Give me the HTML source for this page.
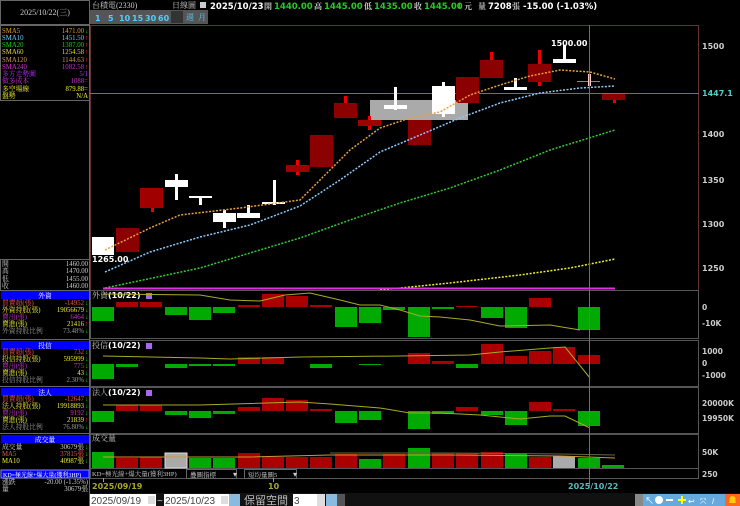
<!DOCTYPE html>
<html><head><meta charset="utf-8"><style>
html,body{margin:0;padding:0;background:#000;width:740px;height:506px;overflow:hidden}
svg{display:block;font-family:"Liberation Sans","Noto Sans CJK TC",sans-serif}
.s{font-family:"Liberation Serif","Noto Serif CJK SC",serif;font-size:8px}
.l text{font-size:6.8px}
.b{font-family:"DejaVu Sans","Liberation Sans",sans-serif;font-weight:bold}
</style></head><body>
<svg width="740" height="506" viewBox="0 0 740 506" xmlns="http://www.w3.org/2000/svg">
<rect width="740" height="506" fill="#000"/>
<rect x="0.5" y="0.5" width="89" height="24" fill="none" stroke="#666"/>
<text x="45" y="15" class="s" fill="#ccc" text-anchor="middle">2025/10/22(三)</text>
<rect x="0.5" y="25.5" width="89" height="75" fill="none" stroke="#666"/>
<g class="s l">
<text x="2" y="33" fill="#e0a030">SMA5</text><text x="84" y="33" fill="#e0a030" text-anchor="end">1471.00</text><text x="85" y="33" fill="#0c0">↓</text>
<text x="2" y="40" fill="#6cf">SMA10</text><text x="84" y="40" fill="#6cf" text-anchor="end">1451.50</text><text x="85" y="40" fill="#f33">↑</text>
<text x="2" y="47" fill="#2c2">SMA20</text><text x="84" y="47" fill="#2c2" text-anchor="end">1387.00</text><text x="85" y="47" fill="#f33">↑</text>
<text x="2" y="54" fill="#dd3">SMA60</text><text x="84" y="54" fill="#dd3" text-anchor="end">1254.58</text><text x="85" y="54" fill="#f33">↑</text>
<text x="2" y="62" fill="#c96">SMA120</text><text x="84" y="62" fill="#c96" text-anchor="end">1144.63</text><text x="85" y="62" fill="#f33">↑</text>
<text x="2" y="69" fill="#c3c">SMA240</text><text x="84" y="69" fill="#c3c" text-anchor="end">1082.58</text><text x="85" y="69" fill="#f33">↑</text>
<text x="2" y="76" fill="#a3f">多方走勢圖</text><text x="88" y="76" fill="#a3f" text-anchor="end">5/1</text>
<text x="2" y="83" fill="#c3c">做多成本</text><text x="88" y="83" fill="#c3c" text-anchor="end">1088=</text>
<text x="2" y="91" fill="#ee3">多空場線</text><text x="88" y="91" fill="#ee3" text-anchor="end">879.88=</text>
<text x="2" y="98" fill="#ee3">盤勢</text><text x="88" y="98" fill="#ee3" text-anchor="end">N/A</text>
</g>
<rect x="0.5" y="259.5" width="89" height="31" fill="none" stroke="#666"/>
<g class="s l" fill="#ccc">
<text x="2" y="266">開</text><text x="88" y="266" text-anchor="end">1460.00</text>
<text x="2" y="273">高</text><text x="88" y="273" text-anchor="end">1470.00</text>
<text x="2" y="281">低</text><text x="88" y="281" text-anchor="end">1455.00</text>
<text x="2" y="288">收</text><text x="88" y="288" text-anchor="end">1460.00</text>
</g>
<g class="s l">
<rect x="1" y="291" width="88" height="8" fill="#00f"/><text x="45" y="298" fill="#fff" text-anchor="middle">外資</text>
<text x="2" y="305" fill="#e55">買賣超(張)</text><text x="84" y="305" fill="#e55" text-anchor="end">-14952</text><text x="85" y="305" fill="#0c0">↓</text>
<text x="2" y="312" fill="#ee3">外資持股(張)</text><text x="84" y="312" fill="#ee3" text-anchor="end">19056679</text><text x="85" y="312" fill="#0c0">↓</text>
<text x="2" y="319" fill="#c3c">賣出(張)</text><text x="84" y="319" fill="#c3c" text-anchor="end">6464</text><text x="85" y="319" fill="#0c0">↓</text>
<text x="2" y="326" fill="#ee3">賣進(張)</text><text x="84" y="326" fill="#ee3" text-anchor="end">21416</text><text x="85" y="326" fill="#f33">↑</text>
<text x="2" y="333" fill="#999">外資持股比例</text><text x="84" y="333" fill="#999" text-anchor="end">73.48%</text><text x="85" y="333" fill="#0c0">↓</text>
<rect x="1" y="341" width="88" height="8" fill="#00f"/><text x="45" y="348" fill="#fff" text-anchor="middle">投信</text>
<text x="2" y="354" fill="#e55">買賣超(張)</text><text x="84" y="354" fill="#e55" text-anchor="end">732</text><text x="85" y="354" fill="#0c0">↓</text>
<text x="2" y="361" fill="#ee3">投信持股(張)</text><text x="84" y="361" fill="#ee3" text-anchor="end">595999</text><text x="85" y="361" fill="#0c0">↓</text>
<text x="2" y="368" fill="#c3c">賣出(張)</text><text x="84" y="368" fill="#c3c" text-anchor="end">775</text><text x="85" y="368" fill="#0c0">↓</text>
<text x="2" y="375" fill="#ee3">賣進(張)</text><text x="84" y="375" fill="#ee3" text-anchor="end">43</text><text x="85" y="375" fill="#0c0">↓</text>
<text x="2" y="382" fill="#999">投信持股比例</text><text x="84" y="382" fill="#999" text-anchor="end">2.30%</text><text x="85" y="382" fill="#0c0">↓</text>
<rect x="1" y="388" width="88" height="8" fill="#00f"/><text x="45" y="395" fill="#fff" text-anchor="middle">法人</text>
<text x="2" y="401" fill="#e55">買賣超(張)</text><text x="84" y="401" fill="#e55" text-anchor="end">-12647</text><text x="85" y="401" fill="#0c0">↓</text>
<text x="2" y="408" fill="#ee3">法人持股(張)</text><text x="84" y="408" fill="#ee3" text-anchor="end">19918893</text><text x="85" y="408" fill="#0c0">↓</text>
<text x="2" y="415" fill="#c3c">賣出(張)</text><text x="84" y="415" fill="#c3c" text-anchor="end">9192</text><text x="85" y="415" fill="#0c0">↓</text>
<text x="2" y="422" fill="#ee3">賣進(張)</text><text x="84" y="422" fill="#ee3" text-anchor="end">21839</text><text x="85" y="422" fill="#f33">↑</text>
<text x="2" y="429" fill="#999">法人持股比例</text><text x="84" y="429" fill="#999" text-anchor="end">76.80%</text><text x="85" y="429" fill="#0c0">↓</text>
<rect x="1" y="435" width="88" height="8" fill="#00f"/><text x="45" y="442" fill="#fff" text-anchor="middle">成交量</text>
<text x="2" y="449" fill="#ccc">成交量</text><text x="84" y="449" fill="#ccc" text-anchor="end">30679張</text><text x="85" y="449" fill="#0c0">↓</text>
<text x="2" y="456" fill="#e55">MA5</text><text x="84" y="456" fill="#e55" text-anchor="end">37815張</text><text x="85" y="456" fill="#0c0">↓</text>
<text x="2" y="463" fill="#ee3">MA10</text><text x="84" y="463" fill="#ee3" text-anchor="end">40987張</text><text x="85" y="463" fill="#0c0">↓</text>
<rect x="1" y="470" width="88" height="8" fill="#00f" stroke="#88f"/><text x="3" y="477" fill="#fff" style="font-size:6px">KD=極光線+爆大量(獲利3HP)</text>
<text x="2" y="484" fill="#ccc">漲跌</text><text x="88" y="484" fill="#ccc" text-anchor="end">-20.00 (-1.35%)</text>
<text x="2" y="491" fill="#ccc">量</text><text x="88" y="491" fill="#ccc" text-anchor="end">30679張</text>
</g>
<line x1="0" y1="290.5" x2="90" y2="290.5" stroke="#666"/>
<line x1="0" y1="339.5" x2="90" y2="339.5" stroke="#666"/>
<line x1="0" y1="386.5" x2="90" y2="386.5" stroke="#666"/>
<line x1="0" y1="433.5" x2="90" y2="433.5" stroke="#666"/>
<line x1="89.5" y1="0" x2="89.5" y2="506" stroke="#666"/>

<text x="92" y="8" class="s" fill="#ccc">台積電(2330)</text>
<text x="172" y="8" class="s" fill="#ccc">日線圖</text>
<rect x="200" y="2" width="6" height="6" fill="#ccc"/>
<g class="b" font-size="8.5">
<text x="210" y="9" fill="#fff">2025/10/23</text>
<text x="264" y="9" class="s" fill="#ccc">開</text><text x="274" y="9" fill="#2c2">1440.00</text>
<text x="314" y="9" class="s" fill="#ccc">高</text><text x="324" y="9" fill="#2c2">1445.00</text>
<text x="364" y="9" class="s" fill="#ccc">低</text><text x="374" y="9" fill="#2c2">1435.00</text>
<text x="414" y="9" class="s" fill="#ccc">收</text><text x="424" y="9" fill="#2c2">1445.00</text>
<text x="456" y="9" fill="#2c2">↓</text><text x="464" y="9" class="s" fill="#ccc">元</text>
<text x="478" y="9" class="s" fill="#ccc">量</text><text x="488" y="9" fill="#fff">7208</text>
<text x="512" y="9" class="s" fill="#ccc">張</text><text x="523" y="9" fill="#fff">-15.00 (-1.03%)</text>
</g>
<rect x="90" y="10" width="118" height="14" fill="#555"/>
<g class="b" font-size="8" fill="#5cf">
<text x="95" y="21">1</text><text x="108" y="21">5</text><text x="119" y="21">10</text><text x="132" y="21">15</text><text x="145" y="21">30</text><text x="158" y="21">60</text>
</g>
<rect x="171" y="11" width="12" height="12" fill="#333"/>
<text x="186" y="20" class="s" fill="#5cf">週</text><text x="198" y="20" class="s" fill="#5cf">月</text>

<rect x="90.5" y="25.5" width="608" height="265" fill="none" stroke="#633"/>
<line x1="90" y1="93.5" x2="699" y2="93.5" stroke="#388"/>
<rect x="370" y="100" width="98" height="20" fill="#aaa"/>
<g>
<rect x="92" y="237" width="22" height="18" fill="#fff"/>
<rect x="116" y="228" width="23" height="24" fill="#8b0000"/>
<rect x="151" y="204" width="3" height="8" fill="#e00"/><rect x="140" y="188" width="23" height="20" fill="#a00000"/>
<rect x="175" y="174" width="3" height="26" fill="#fff"/><rect x="165" y="180" width="23" height="7" fill="#fff"/>
<rect x="199" y="196" width="3" height="9" fill="#fff"/><rect x="189" y="196" width="23" height="2" fill="#fff"/>
<rect x="223" y="210" width="3" height="18" fill="#fff"/><rect x="213" y="213" width="23" height="9" fill="#fff"/>
<rect x="247" y="205" width="3" height="13" fill="#fff"/><rect x="237" y="213" width="23" height="5" fill="#fff"/>
<rect x="273" y="180" width="3" height="25" fill="#fff"/><rect x="262" y="202" width="23" height="2" fill="#fff"/>
<rect x="296" y="160" width="3" height="15" fill="#e00"/><rect x="286" y="165" width="23" height="7" fill="#a00000"/>
<rect x="310" y="135" width="23" height="32" fill="#8b0000"/>
<rect x="344" y="96" width="3" height="22" fill="#e00"/><rect x="334" y="103" width="23" height="15" fill="#8b0000"/>
<rect x="368" y="116" width="3" height="14" fill="#e00"/><rect x="358" y="120" width="23" height="6" fill="#a00000"/>
<rect x="394" y="87" width="3" height="23" fill="#fff"/><rect x="384" y="105" width="23" height="4" fill="#fff"/>
<rect x="408" y="120" width="23" height="25" fill="#8b0000"/>
<rect x="442" y="82" width="3" height="35" fill="#fff"/><rect x="432" y="86" width="23" height="28" fill="#fff"/>
<rect x="456" y="77" width="23" height="26" fill="#8b0000"/>
<rect x="490" y="52" width="3" height="26" fill="#e00"/><rect x="480" y="60" width="23" height="18" fill="#8b0000"/>
<rect x="514" y="78" width="3" height="12" fill="#fff"/><rect x="504" y="87" width="23" height="3" fill="#fff"/>
<rect x="538" y="50" width="3" height="36" fill="#e00"/><rect x="528" y="64" width="23" height="18" fill="#8b0000"/>
<rect x="563" y="45" width="3" height="17" fill="#fff"/><rect x="553" y="59" width="23" height="4" fill="#fff"/>
<rect x="577" y="81" width="23" height="1" fill="#888"/><rect x="588" y="74" width="3" height="12" fill="#fcc"/>
<rect x="613" y="94" width="3" height="9" fill="#e00"/><rect x="602" y="94" width="23" height="6" fill="#8b0000"/>
</g>
<text x="92" y="262" class="b" font-size="8" fill="#fff">1265.00</text>
<text x="551" y="46" class="b" font-size="8" fill="#fff">1500.00</text>
<polyline points="105,250 150,228 180,215 240,208 300,200 330,170 350,150 380,128 410,118 440,112 470,95 500,85 530,76 560,70 590,72 615,79" fill="none" stroke="#e8a040" stroke-width="1.5" stroke-dasharray="2,1.5"/>
<polyline points="105,272 150,252 200,237 250,225 300,206 340,180 380,152 420,135 460,118 500,103 540,93 580,88 615,86" fill="none" stroke="#8cf" stroke-width="1.5" stroke-dasharray="2,1.5"/>
<polyline points="105,288 200,268 300,238 350,220 400,203 450,188 500,170 550,150 615,130" fill="none" stroke="#3c3" stroke-width="1.5" stroke-dasharray="2,1.5"/>
<polyline points="380,290 450,283 520,275 570,268 615,259" fill="none" stroke="#ee3" stroke-width="1.5" stroke-dasharray="2,1.5"/>
<line x1="103" y1="288.5" x2="615" y2="288.5" stroke="#d3d" stroke-width="2"/>
<g class="b" font-size="8" fill="#ccc">
<text x="702" y="49">1500</text><text x="702" y="137">1400</text><text x="702" y="183">1350</text><text x="702" y="227">1300</text><text x="702" y="271">1250</text>
<text x="702" y="96" fill="#5cc">1447.1</text>
</g>
<g stroke="#555" fill="none">
<rect x="90.5" y="290.5" width="608" height="48"/>
<rect x="90.5" y="340.5" width="608" height="46"/>
<rect x="90.5" y="387.5" width="608" height="46"/>
<rect x="90.5" y="434.5" width="608" height="34"/>
<rect x="90.5" y="468.5" width="608" height="10"/>
</g>
<g class="s" fill="#ccc"><text x="92" y="298">外資</text><text x="92" y="348">投信</text><text x="92" y="395">法人</text><text x="92" y="441">成交量</text></g>
<g class="b" font-size="8" fill="#fff"><text x="108" y="298">(10/22)</text><text x="108" y="348">(10/22)</text><text x="108" y="395">(10/22)</text></g>
<rect x="146" y="293" width="6" height="6" fill="#a6e"/><rect x="146" y="343" width="6" height="6" fill="#a6e"/><rect x="146" y="390" width="6" height="6" fill="#a6e"/>
<g fill="#0a0">
<rect x="92" y="307" width="22" height="14"/><rect x="165" y="307" width="22" height="8"/><rect x="189" y="307" width="22" height="13"/><rect x="213" y="307" width="22" height="6"/>
<rect x="335" y="307" width="22" height="20"/><rect x="359" y="307" width="22" height="16"/><rect x="383" y="307" width="22" height="3"/><rect x="408" y="307" width="22" height="30"/><rect x="432" y="307" width="22" height="2"/>
<rect x="481" y="307" width="22" height="11"/><rect x="505" y="307" width="22" height="21"/><rect x="578" y="307" width="22" height="23"/>
</g>
<g fill="#a00">
<rect x="116" y="302" width="22" height="5"/><rect x="140" y="302" width="22" height="5"/><rect x="238" y="305" width="22" height="2"/><rect x="262" y="294" width="22" height="13"/><rect x="286" y="296" width="22" height="11"/><rect x="310" y="305" width="22" height="2"/><rect x="456" y="306" width="22" height="1"/><rect x="529" y="298" width="22" height="9"/>
</g>
<polyline points="103,294 200,295 230,300 260,301 285,295 310,293 340,300 360,305 380,305 400,310 420,316 440,317 470,320 500,326 550,325 580,330" fill="none" stroke="#aa2" stroke-width="1"/>
<g fill="#0a0">
<rect x="92" y="364" width="22" height="15"/><rect x="116" y="364" width="22" height="3"/><rect x="165" y="364" width="22" height="4"/><rect x="189" y="364" width="22" height="2"/><rect x="213" y="364" width="22" height="2"/><rect x="310" y="364" width="22" height="4"/><rect x="359" y="364" width="22" height="1"/><rect x="456" y="364" width="22" height="4"/>
</g>
<g fill="#a00">
<rect x="238" y="357" width="22" height="7"/><rect x="262" y="357" width="22" height="7"/><rect x="408" y="353" width="22" height="11"/><rect x="432" y="361" width="22" height="3"/><rect x="481" y="344" width="22" height="20"/><rect x="505" y="356" width="22" height="8"/><rect x="529" y="351" width="22" height="13"/><rect x="553" y="347" width="22" height="17"/><rect x="578" y="355" width="22" height="9"/>
</g>
<polyline points="103,356 200,358 230,359 300,357 400,356 470,355 500,352 550,348 565,347 590,378" fill="none" stroke="#aa2" stroke-width="1"/>
<g fill="#0a0">
<rect x="92" y="411" width="22" height="11"/><rect x="165" y="411" width="22" height="4"/><rect x="189" y="411" width="22" height="7"/><rect x="213" y="411" width="22" height="3"/><rect x="335" y="411" width="22" height="12"/><rect x="359" y="411" width="22" height="9"/><rect x="408" y="411" width="22" height="18"/><rect x="432" y="411" width="22" height="3"/><rect x="481" y="411" width="22" height="4"/><rect x="505" y="411" width="22" height="14"/><rect x="578" y="411" width="22" height="15"/>
</g>
<g fill="#a00">
<rect x="116" y="405" width="22" height="6"/><rect x="140" y="405" width="22" height="6"/><rect x="238" y="407" width="22" height="4"/><rect x="262" y="398" width="22" height="13"/><rect x="286" y="400" width="22" height="11"/><rect x="310" y="409" width="22" height="2"/><rect x="456" y="407" width="22" height="4"/><rect x="529" y="402" width="22" height="9"/><rect x="553" y="409" width="22" height="2"/>
</g>
<polyline points="103,405 200,405 300,402 330,404 380,408 410,413 440,413 480,415 520,419 550,416 565,416 590,428" fill="none" stroke="#aa2" stroke-width="1"/>
<g fill="#0a0">
<rect x="92" y="452" width="22" height="16"/><rect x="189" y="458" width="22" height="10"/><rect x="213" y="458" width="22" height="10"/><rect x="359" y="459" width="22" height="9"/><rect x="408" y="448" width="22" height="20"/><rect x="505" y="453" width="22" height="15"/><rect x="578" y="458" width="22" height="10"/><rect x="602" y="465" width="22" height="3"/>
</g>
<g fill="#a00">
<rect x="116" y="458" width="22" height="10"/><rect x="140" y="457" width="22" height="11"/><rect x="238" y="453" width="22" height="15"/><rect x="262" y="457" width="22" height="11"/><rect x="286" y="457" width="22" height="11"/><rect x="310" y="457" width="22" height="11"/><rect x="335" y="454" width="22" height="14"/><rect x="383" y="454" width="22" height="14"/><rect x="432" y="453" width="22" height="15"/><rect x="456" y="453" width="22" height="15"/><rect x="481" y="452" width="22" height="16"/><rect x="529" y="457" width="22" height="11"/>
</g>
<g fill="#aaa"><rect x="165" y="453" width="22" height="15" stroke="#ddd"/><rect x="553" y="456" width="22" height="12"/></g>
<polyline points="103,457 250,457 330,455 450,455 560,456 615,458" fill="none" stroke="#c93" stroke-width="1"/>
<polyline points="330,453 450,453 560,454 615,455" fill="none" stroke="#664" stroke-width="1"/>
<g class="b" font-size="7.5" fill="#ccc">
<text x="702" y="310">0</text><text x="702" y="326">-10K</text>
<text x="702" y="354">1000</text><text x="702" y="366">0</text><text x="702" y="378">-1000</text>
<text x="702" y="406">20000K</text><text x="702" y="421">19950K</text>
<text x="702" y="455">50K</text><text x="702" y="477">250</text>
</g>
<g class="s" font-size="7" fill="#ccc">
<text x="92" y="476" style="font-size:6.5px">KD=極光線+爆大量(獲利3HP)</text>
<rect x="186.5" y="469.5" width="50" height="9" fill="none" stroke="#666"/><text x="190" y="477" style="font-size:6.5px">疊圖指標</text><text x="233" y="477">▾</text>
<rect x="244.5" y="469.5" width="52" height="9" fill="none" stroke="#666"/><text x="248" y="477" style="font-size:6.5px">短均量圖5</text><text x="293" y="477">▾</text>
</g>
<line x1="589.5" y1="25" x2="589.5" y2="486" stroke="#388"/>
<line x1="103.5" y1="478" x2="103.5" y2="482" stroke="#aa2"/><line x1="273.5" y1="478" x2="273.5" y2="482" stroke="#aa2"/>
<g class="b" font-size="8"><text x="92" y="489" fill="#aa2">2025/09/19</text><text x="268" y="489" fill="#aa2">10</text><text x="568" y="489" fill="#5bb">2025/10/22</text></g>
<rect x="90" y="493" width="650" height="13" fill="#111"/>
<rect x="90" y="494" width="66" height="12" fill="#fff"/><text x="91" y="504" font-size="10" fill="#444" font-family="Liberation Sans,sans-serif">2025/09/19</text><rect x="148" y="496" width="7" height="8" fill="#ddd"/>
<text x="157" y="504" fill="#ccc" font-size="10">~</text>
<rect x="164" y="494" width="66" height="12" fill="#fff"/><text x="165" y="504" font-size="10" fill="#444" font-family="Liberation Sans,sans-serif">2025/10/23</text><rect x="221" y="496" width="7" height="8" fill="#ddd"/>
<rect x="229" y="494" width="11" height="12" fill="#8bd"/>
<text x="244" y="504" font-size="11" fill="#bbb" font-family="Noto Sans CJK TC,sans-serif">保留空間</text>
<rect x="293" y="494" width="24" height="12" fill="#fff"/><text x="294" y="504" font-size="10" fill="#444">3</text><rect x="317" y="494" width="8" height="12" fill="#ddd"/>
<rect x="326" y="494" width="11" height="12" fill="#8bd"/><rect x="337" y="494" width="8" height="12" fill="#555"/>
<rect x="635" y="494" width="8" height="12" fill="#888"/>
<rect x="643" y="494" width="82" height="12" fill="#6ad"/>
<g fill="#fff" font-size="9"><text x="645" y="504">↖</text><circle cx="659" cy="500" r="4"/><rect x="666" y="499" width="7" height="2"/></g>
<rect x="678" y="499" width="8" height="2" fill="#ff0"/><rect x="681" y="496" width="2" height="8" fill="#ff0"/>
<g fill="#fff" font-size="8"><text x="688" y="504">↩</text><text x="700" y="504">⤧</text><text x="712" y="504">/</text></g>
<rect x="725" y="494" width="15" height="12" fill="#f62"/><path d="M732.5 496c-2 0-3 1.5-3 3.5v2.5l-1 1h8l-1-1v-2.5c0-2-1-3.5-3-3.5z" fill="#fc0"/>
</svg>
</body></html>
